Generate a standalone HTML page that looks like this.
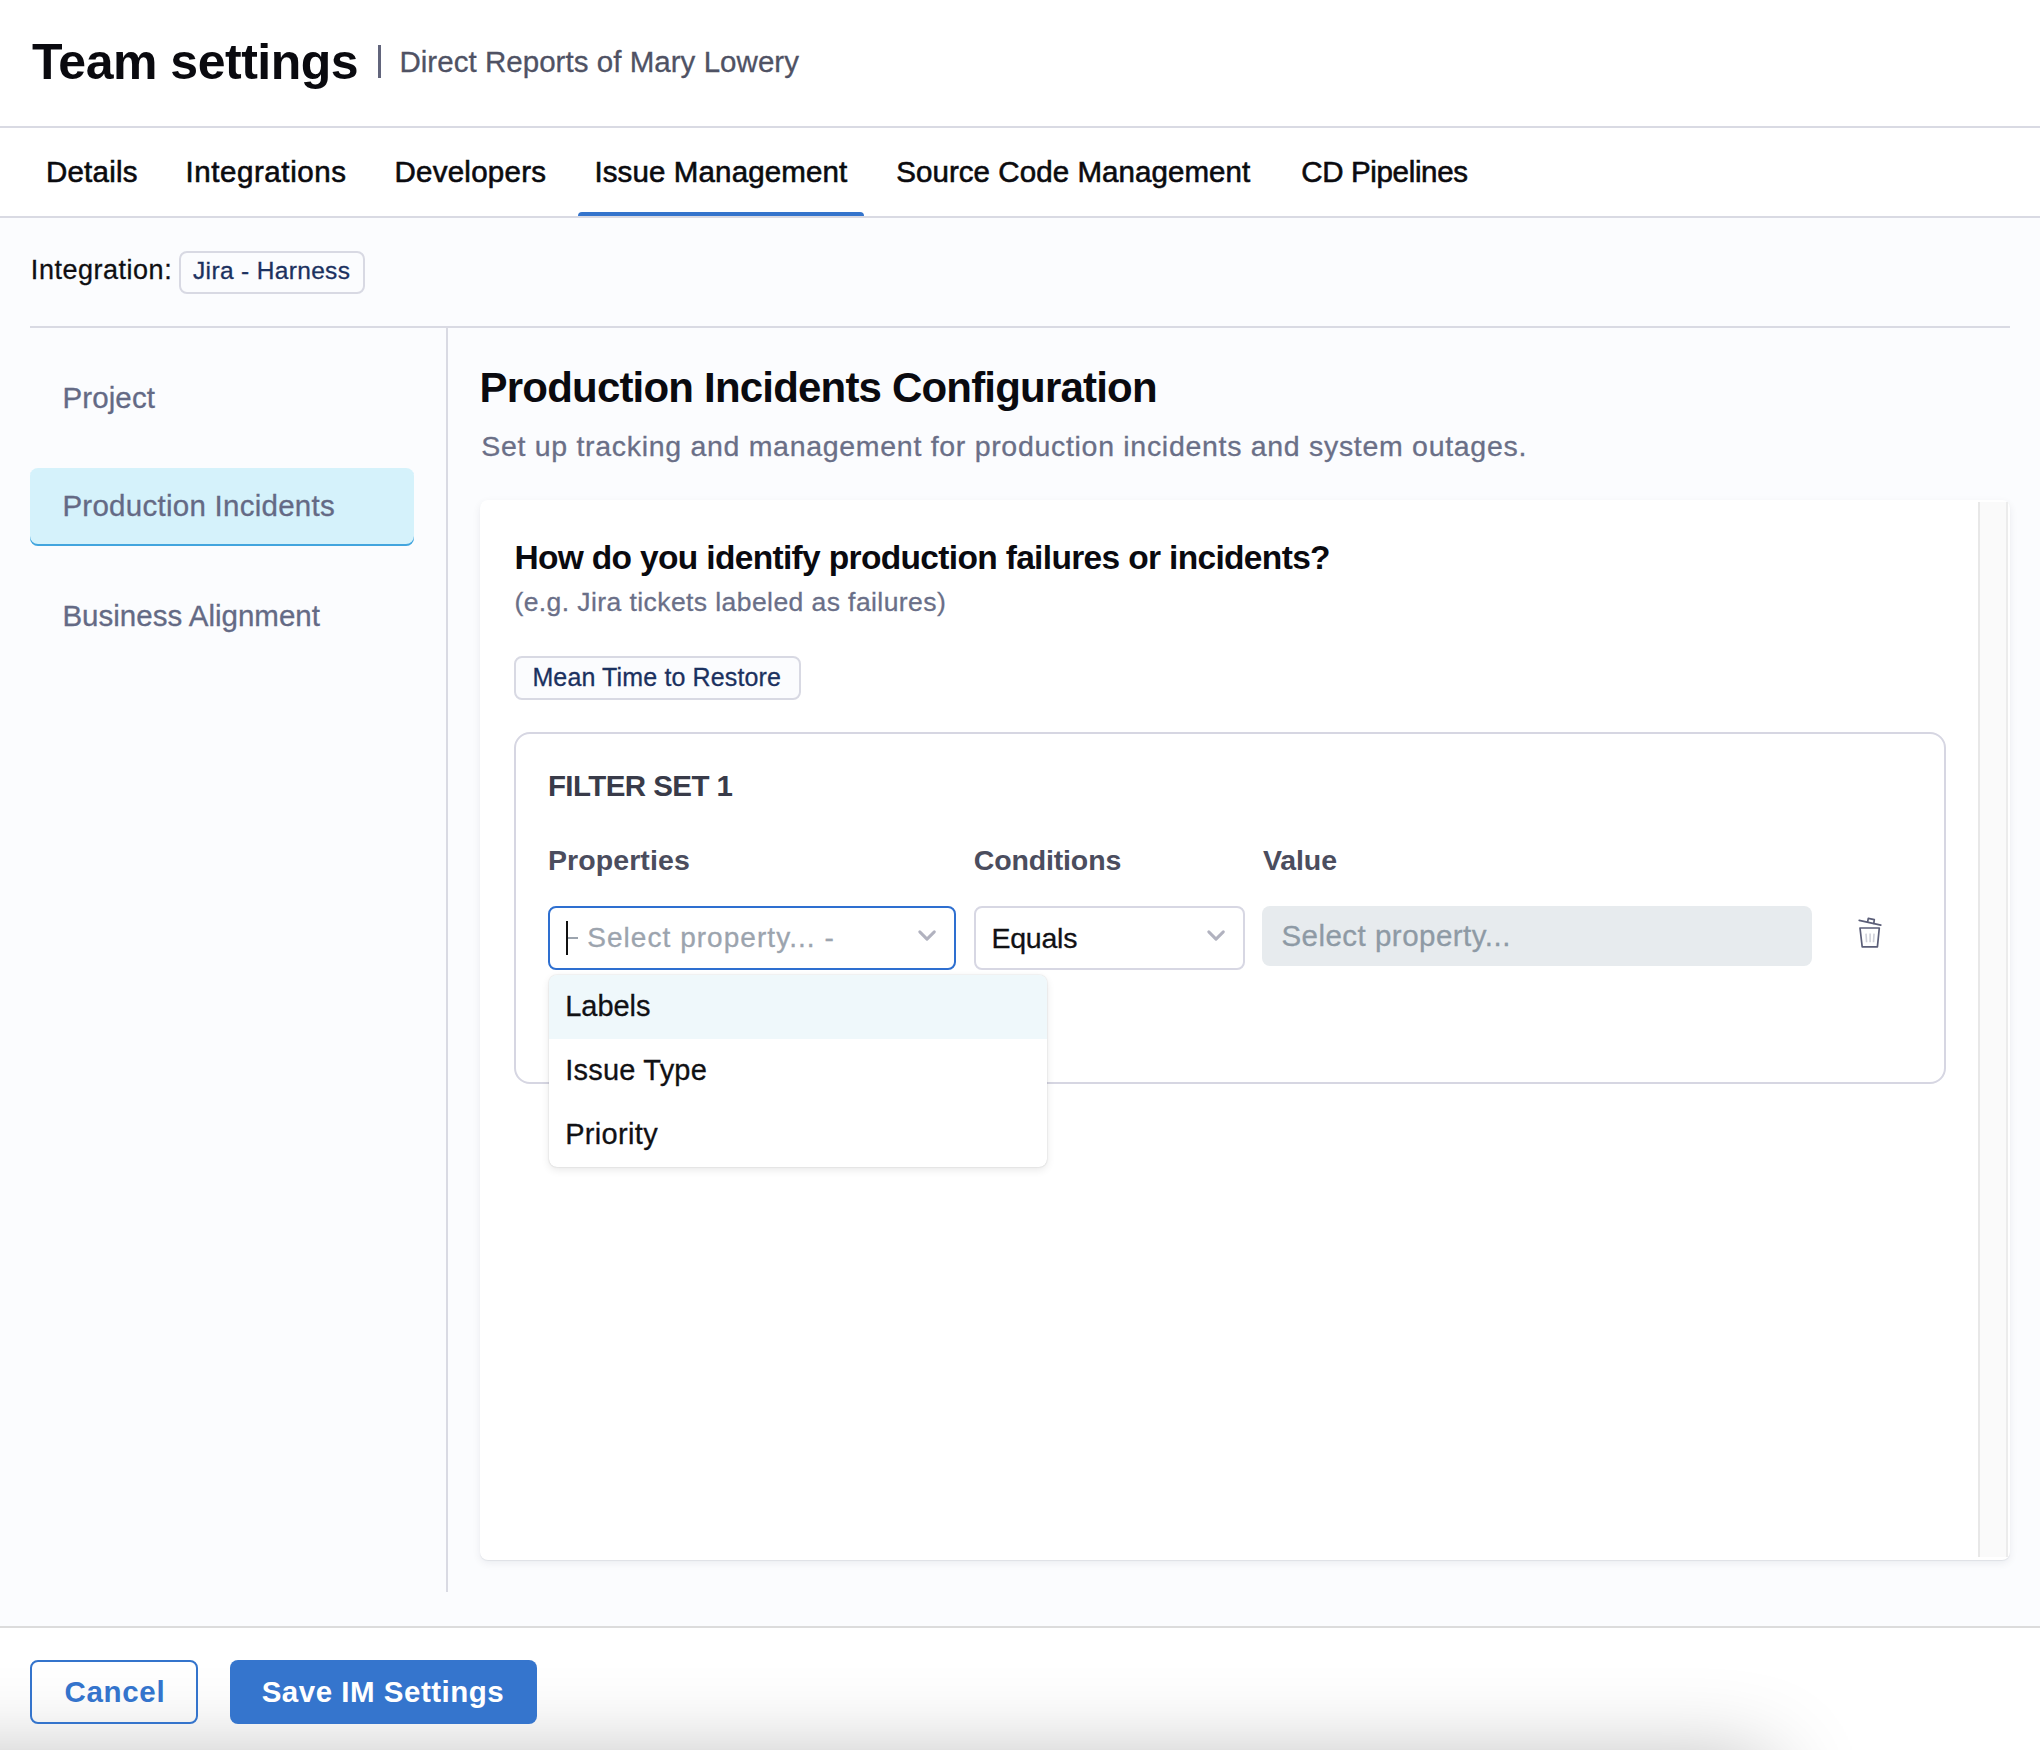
<!DOCTYPE html>
<html><head><meta charset="utf-8">
<style>
html,body{margin:0;padding:0;}
body{width:2040px;height:1750px;position:relative;overflow:hidden;background:#ffffff;font-family:"Liberation Sans",sans-serif;}
.t{position:absolute;white-space:pre;}
.a{position:absolute;box-sizing:border-box;}
</style></head><body>
<!-- header -->
<div class="a" style="left:0;top:0;width:2040px;height:127px;background:#fff;"></div>
<div class="a" style="left:378px;top:45px;width:2.5px;height:33px;background:#62657c;"></div>
<div class="a" style="left:0;top:126px;width:2040px;height:2px;background:#d9dae3;"></div>
<!-- tabs -->
<div class="a" style="left:578px;top:212px;width:286px;height:4px;background:#3474cc;border-radius:4px 4px 0 0;"></div>
<div class="a" style="left:0;top:216px;width:2040px;height:2px;background:#d9dae3;"></div>
<!-- content bg -->
<div class="a" style="left:0;top:218px;width:2040px;height:1408px;background:#fbfcfe;"></div>
<!-- jira chip -->
<div class="a" style="left:178.5px;top:250.5px;width:186px;height:43px;border:2px solid #d8d9e3;border-radius:8px;background:#fbfcfe;"></div>
<!-- h line -->
<div class="a" style="left:30px;top:326px;width:1980px;height:2px;background:#d9dae3;"></div>
<!-- v line -->
<div class="a" style="left:446px;top:327px;width:2px;height:1265px;background:#d9dae3;"></div>
<!-- sidebar selected -->
<div class="a" style="left:30px;top:468px;width:384px;height:77.5px;background:#d5f2fb;border-radius:8px;box-shadow:inset 0 -2px 0 #42a5de;"></div>
<!-- card -->
<div class="a" style="left:480px;top:500px;width:1530px;height:1060px;background:#fff;border-radius:8px;box-shadow:0 1px 1px rgba(16,24,60,0.07),0 3px 8px rgba(16,24,60,0.07);"></div>
<!-- scrollbar track -->
<div class="a" style="left:1978px;top:502px;width:30px;height:1055px;background:#fafafa;border-left:2px solid #e8e8e8;border-right:2px solid #ececec;"></div>
<!-- mttr chip -->
<div class="a" style="left:513.5px;top:655.5px;width:287px;height:44.5px;border:2px solid #d8d9e3;border-radius:8px;background:#fbfcfe;"></div>
<!-- filter card -->
<div class="a" style="left:514px;top:732px;width:1432px;height:352px;border:2px solid #d6d6e2;border-radius:16px;background:#fff;"></div>
<!-- select -->
<div class="a" style="left:548px;top:906px;width:408px;height:64px;border:2.5px solid #2e6fd0;border-radius:8px;background:#fff;"></div>
<div class="a" style="left:566px;top:936.5px;width:11.5px;height:2.2px;background:#9ca4ae;"></div>
<div class="a" style="left:566px;top:921px;width:2.2px;height:34px;background:#111;"></div>
<svg class="a" style="left:914px;top:926px;" width="26" height="20" viewBox="0 0 26 20"><path d="M5.8 5.9 L13 13.1 L20.3 5.9" fill="none" stroke="#b1b2bf" stroke-width="3" stroke-linecap="round" stroke-linejoin="round"/></svg>
<!-- equals -->
<div class="a" style="left:974px;top:906px;width:271px;height:64px;border:2px solid #d7d7e3;border-radius:8px;background:#fff;"></div>
<svg class="a" style="left:1203px;top:926px;" width="26" height="20" viewBox="0 0 26 20"><path d="M5.8 5.9 L13 13.1 L20.3 5.9" fill="none" stroke="#b1b2bf" stroke-width="3" stroke-linecap="round" stroke-linejoin="round"/></svg>
<!-- value -->
<div class="a" style="left:1262px;top:906px;width:550px;height:60px;border-radius:8px;background:#e7ebee;"></div>
<!-- trash -->
<svg class="a" style="left:1850px;top:910px;" width="40" height="44" viewBox="0 0 40 44">
<g fill="none" stroke="#5b5e78" stroke-width="1.7" stroke-linejoin="round" stroke-linecap="round">
<path d="M9.2 10.3 L30.8 15.1"/>
<path d="M17.6 11.9 L18.3 8.4 L24.3 9.7 L23.8 13.4"/>
<path d="M10 18 L29.3 18 L27.4 36.8 L12.2 36.8 Z"/>
</g>
<g fill="none" stroke="#cfd0d9" stroke-width="1.6"><path d="M16 23.6 L16.6 32.2"/><path d="M20.1 23.6 L20.1 32.2"/><path d="M24 23.6 L23.5 32.2"/></g>
</svg>
<!-- dropdown menu -->
<div class="a" style="left:549px;top:974.5px;width:498px;height:192.5px;background:#fff;border-radius:8px;box-shadow:0 0 1.5px rgba(0,0,0,0.22),0 3px 9px rgba(0,0,0,0.09);overflow:hidden;">
 <div style="position:absolute;left:0;top:0;width:100%;height:64px;background:#eff8fb;"></div>
</div>
<!-- footer -->
<div class="a" style="left:0;top:1626px;width:2040px;height:2px;background:#dcdcdc;"></div>
<div class="a" style="left:-300px;top:1762px;width:2070px;height:200px;background:#000;box-shadow:0 0 90px 0 rgba(0,0,0,0.29);"></div>
<div class="a" style="left:30px;top:1660px;width:168px;height:64px;border:2.2px solid #3474cc;border-radius:8px;background:transparent;"></div>
<div class="a" style="left:230px;top:1660px;width:307px;height:64px;border-radius:8px;background:#3575cd;"></div>
<div class="t" id="title" style="left:32.00px;top:36.67px;font-size:50.0px;line-height:50.0px;letter-spacing:-0.492px;font-weight:700;color:#0a0a0f;">Team settings</div>
<div class="t" id="sub" style="left:399.40px;top:47.03px;font-size:29.5px;line-height:29.5px;letter-spacing:0.043px;font-weight:400;color:#4f5264;-webkit-text-stroke:0.3px #4f5264;">Direct Reports of Mary Lowery</div>
<div class="t" id="t1" style="left:45.90px;top:157.03px;font-size:29.5px;line-height:29.5px;letter-spacing:0.234px;font-weight:400;color:#0b0b0f;-webkit-text-stroke:0.6px #0b0b0f;">Details</div>
<div class="t" id="t2" style="left:185.40px;top:157.03px;font-size:29.5px;line-height:29.5px;letter-spacing:0.588px;font-weight:400;color:#0b0b0f;-webkit-text-stroke:0.6px #0b0b0f;">Integrations</div>
<div class="t" id="t3" style="left:394.40px;top:157.03px;font-size:29.5px;line-height:29.5px;letter-spacing:0.267px;font-weight:400;color:#0b0b0f;-webkit-text-stroke:0.6px #0b0b0f;">Developers</div>
<div class="t" id="t4" style="left:594.40px;top:157.03px;font-size:29.5px;line-height:29.5px;letter-spacing:0.127px;font-weight:400;color:#0b0b0f;-webkit-text-stroke:0.6px #0b0b0f;">Issue Management</div>
<div class="t" id="t5" style="left:896.20px;top:157.03px;font-size:29.5px;line-height:29.5px;letter-spacing:0.067px;font-weight:400;color:#0b0b0f;-webkit-text-stroke:0.6px #0b0b0f;">Source Code Management</div>
<div class="t" id="t6" style="left:1301.20px;top:157.03px;font-size:29.5px;line-height:29.5px;letter-spacing:-0.337px;font-weight:400;color:#0b0b0f;-webkit-text-stroke:0.6px #0b0b0f;">CD Pipelines</div>
<div class="t" id="integ" style="left:30.86px;top:257.14px;font-size:27.0px;line-height:27.0px;letter-spacing:0.516px;font-weight:400;color:#0f0f12;-webkit-text-stroke:0.3px #0f0f12;">Integration:</div>
<div class="t" id="jira" style="left:193.00px;top:259.26px;font-size:24.5px;line-height:24.5px;letter-spacing:0.345px;font-weight:400;color:#1b3160;-webkit-text-stroke:0.3px #1b3160;">Jira - Harness</div>
<div class="t" id="proj" style="left:62.40px;top:383.03px;font-size:29.5px;line-height:29.5px;letter-spacing:0.130px;font-weight:400;color:#646a85;-webkit-text-stroke:0.3px #646a85;">Project</div>
<div class="t" id="pi" style="left:62.40px;top:491.03px;font-size:29.5px;line-height:29.5px;letter-spacing:0.266px;font-weight:400;color:#646a85;-webkit-text-stroke:0.3px #646a85;">Production Incidents</div>
<div class="t" id="ba" style="left:62.40px;top:601.03px;font-size:29.5px;line-height:29.5px;letter-spacing:0.008px;font-weight:400;color:#646a85;-webkit-text-stroke:0.3px #646a85;">Business Alignment</div>
<div class="t" id="h1" style="left:479.60px;top:366.95px;font-size:42.0px;line-height:42.0px;letter-spacing:-0.808px;font-weight:700;color:#0a0a0f;">Production Incidents Configuration</div>
<div class="t" id="h1sub" style="left:481.20px;top:431.87px;font-size:28.5px;line-height:28.5px;letter-spacing:0.700px;font-weight:400;color:#6a6f87;-webkit-text-stroke:0.3px #6a6f87;">Set up tracking and management for production incidents and system outages.</div>
<div class="t" id="q" style="left:514.40px;top:540.64px;font-size:33.5px;line-height:33.5px;letter-spacing:-0.661px;font-weight:700;color:#0a0a0f;">How do you identify production failures or incidents?</div>
<div class="t" id="hint" style="left:514.40px;top:588.57px;font-size:26.5px;line-height:26.5px;letter-spacing:0.421px;font-weight:400;color:#6a6f88;-webkit-text-stroke:0.3px #6a6f88;">(e.g. Jira tickets labeled as failures)</div>
<div class="t" id="mttr" style="left:532.40px;top:664.84px;font-size:25.0px;line-height:25.0px;letter-spacing:0.140px;font-weight:400;color:#1b3160;-webkit-text-stroke:0.3px #1b3160;">Mean Time to Restore</div>
<div class="t" id="fset" style="left:547.90px;top:771.03px;font-size:29.5px;line-height:29.5px;letter-spacing:-0.558px;font-weight:700;color:#393b49;">FILTER SET 1</div>
<div class="t" id="props" style="left:547.90px;top:845.87px;font-size:28.5px;line-height:28.5px;letter-spacing:0.100px;font-weight:700;color:#4b4d5e;">Properties</div>
<div class="t" id="cond" style="left:973.70px;top:845.87px;font-size:28.5px;line-height:28.5px;letter-spacing:-0.138px;font-weight:700;color:#4b4d5e;">Conditions</div>
<div class="t" id="val" style="left:1263.00px;top:845.87px;font-size:28.5px;line-height:28.5px;letter-spacing:-0.114px;font-weight:700;color:#4b4d5e;">Value</div>
<div class="t" id="sel" style="left:587.20px;top:924.30px;font-size:28.0px;line-height:28.0px;letter-spacing:1.049px;font-weight:400;color:#9ca4ae;-webkit-text-stroke:0.3px #9ca4ae;">Select property... -</div>
<div class="t" id="eq" style="left:991.40px;top:923.87px;font-size:28.5px;line-height:28.5px;letter-spacing:-0.208px;font-weight:400;color:#111114;-webkit-text-stroke:0.3px #111114;">Equals</div>
<div class="t" id="vsel" style="left:1281.40px;top:921.03px;font-size:29.5px;line-height:29.5px;letter-spacing:0.482px;font-weight:400;color:#8e9aa5;-webkit-text-stroke:0.3px #8e9aa5;">Select property...</div>
<div class="t" id="lab" style="left:565.20px;top:992.45px;font-size:29.0px;line-height:29.0px;letter-spacing:-0.024px;font-weight:400;color:#111114;-webkit-text-stroke:0.3px #111114;">Labels</div>
<div class="t" id="it" style="left:565.24px;top:1056.45px;font-size:29.0px;line-height:29.0px;letter-spacing:0.206px;font-weight:400;color:#111114;-webkit-text-stroke:0.3px #111114;">Issue Type</div>
<div class="t" id="pr" style="left:565.20px;top:1120.45px;font-size:29.0px;line-height:29.0px;letter-spacing:0.328px;font-weight:400;color:#111114;-webkit-text-stroke:0.3px #111114;">Priority</div>
<div class="t" id="cancel" style="left:64.58px;top:1677.03px;font-size:29.5px;line-height:29.5px;letter-spacing:0.652px;font-weight:700;color:#3474cc;">Cancel</div>
<div class="t" id="save" style="left:261.64px;top:1677.03px;font-size:29.5px;line-height:29.5px;letter-spacing:0.514px;font-weight:700;color:#ffffff;">Save IM Settings</div>
</body></html>
